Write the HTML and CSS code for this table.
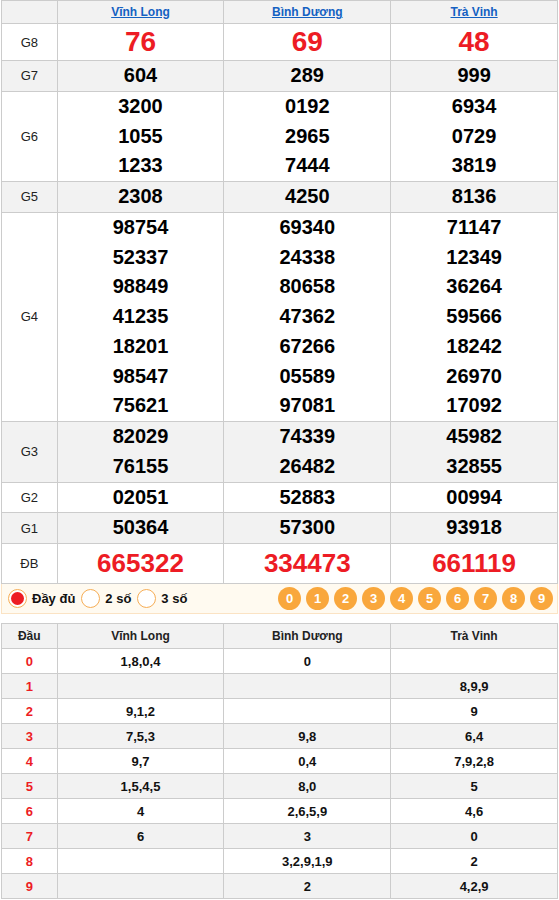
FILE: index.html
```html
<!DOCTYPE html>
<html lang="vi">
<head>
<meta charset="utf-8">
<title>XSMN</title>
<link rel="stylesheet" href="styles.css">
</head>
<body>
<div class="wrap">
<table class="kq">
<colgroup><col class="c1"><col class="c2"><col class="c2"><col class="c2"></colgroup>
<thead>
<tr><th></th><th><a href="#">Vĩnh Long</a></th><th><a href="#">Bình Dương</a></th><th><a href="#">Trà Vinh</a></th></tr>
</thead>
<tbody>
<tr class="g8"><td class="lbl">G8</td><td class="num">76</td><td class="num">69</td><td class="num">48</td></tr>
<tr class="alt"><td class="lbl">G7</td><td class="num">604</td><td class="num">289</td><td class="num">999</td></tr>
<tr><td class="lbl">G6</td>
<td class="num"><div>3200</div><div>1055</div><div>1233</div></td>
<td class="num"><div>0192</div><div>2965</div><div>7444</div></td>
<td class="num"><div>6934</div><div>0729</div><div>3819</div></td></tr>
<tr class="alt"><td class="lbl">G5</td><td class="num">2308</td><td class="num">4250</td><td class="num">8136</td></tr>
<tr><td class="lbl">G4</td>
<td class="num"><div>98754</div><div>52337</div><div>98849</div><div>41235</div><div>18201</div><div>98547</div><div>75621</div></td>
<td class="num"><div>69340</div><div>24338</div><div>80658</div><div>47362</div><div>67266</div><div>05589</div><div>97081</div></td>
<td class="num"><div>71147</div><div>12349</div><div>36264</div><div>59566</div><div>18242</div><div>26970</div><div>17092</div></td></tr>
<tr class="alt"><td class="lbl">G3</td>
<td class="num"><div>82029</div><div>76155</div></td>
<td class="num"><div>74339</div><div>26482</div></td>
<td class="num"><div>45982</div><div>32855</div></td></tr>
<tr><td class="lbl">G2</td><td class="num">02051</td><td class="num">52883</td><td class="num">00994</td></tr>
<tr class="alt"><td class="lbl">G1</td><td class="num">50364</td><td class="num">57300</td><td class="num">93918</td></tr>
<tr class="db"><td class="lbl">ĐB</td><td class="num">665322</td><td class="num">334473</td><td class="num">661119</td></tr>
</tbody>
</table>

<div class="filter">
  <div class="opts">
    <label class="opt"><span class="radio on"></span>Đầy đủ</label>
    <label class="opt"><span class="radio"></span>2 số</label>
    <label class="opt"><span class="radio"></span>3 số</label>
  </div>
  <div class="balls">
    <span class="ball">0</span><span class="ball">1</span><span class="ball">2</span><span class="ball">3</span><span class="ball">4</span><span class="ball">5</span><span class="ball">6</span><span class="ball">7</span><span class="ball">8</span><span class="ball">9</span>
  </div>
</div>

<table class="loto">
<colgroup><col class="c1"><col class="c2"><col class="c2"><col class="c2"></colgroup>
<thead><tr><th>Đầu</th><th>Vĩnh Long</th><th>Bình Dương</th><th>Trà Vinh</th></tr></thead>
<tbody>
<tr><td class="d">0</td><td>1,8,0,4</td><td>0</td><td></td></tr>
<tr class="alt"><td class="d">1</td><td></td><td></td><td>8,9,9</td></tr>
<tr><td class="d">2</td><td>9,1,2</td><td></td><td>9</td></tr>
<tr class="alt"><td class="d">3</td><td>7,5,3</td><td>9,8</td><td>6,4</td></tr>
<tr><td class="d">4</td><td>9,7</td><td>0,4</td><td>7,9,2,8</td></tr>
<tr class="alt"><td class="d">5</td><td>1,5,4,5</td><td>8,0</td><td>5</td></tr>
<tr><td class="d">6</td><td>4</td><td>2,6,5,9</td><td>4,6</td></tr>
<tr class="alt"><td class="d">7</td><td>6</td><td>3</td><td>0</td></tr>
<tr><td class="d">8</td><td></td><td>3,2,9,1,9</td><td>2</td></tr>
<tr class="alt"><td class="d">9</td><td></td><td>2</td><td>4,2,9</td></tr>
</tbody>
</table>
</div>
</body>
</html>
```

FILE: styles.css
```css
* { box-sizing: border-box; }
body {
  margin: 0;
  font-family: "Liberation Sans", Arial, sans-serif;
  color: #000;
  background: #fff;
}
.wrap { margin: 0 1px; }

table {
  width: 100%;
  border-collapse: collapse;
  table-layout: fixed;
}
col.c1 { width: 10%; }
col.c2 { width: 30%; }
th, td {
  border: 1px solid #cccccc;
  padding: 0;
  text-align: center;
  vertical-align: middle;
}

.kq thead th {
  background: #f2f2f2;
  height: 23px;
  font-size: 12px;
  font-weight: bold;
}
.kq thead a { color: #1461c2; text-decoration: underline; }
.kq tr.alt td { background: #f2f2f2; }
.kq td.lbl { font-size: 13px; color: #222; }
.kq td.num {
  font-size: 20px;
  font-weight: bold;
  line-height: 29.75px;
  color: #000;
}
.kq tr.g8 td.num {
  font-size: 28px;
  line-height: 36px;
  color: #ed1c24;
}
.kq tr.db td.num {
  font-size: 26px;
  line-height: 39px;
  color: #ed1c24;
}

.filter {
  display: flex;
  justify-content: space-between;
  align-items: center;
  height: 30px;
  background: #fffaf0;
  border: 1px solid #fbe3c4;
  border-top: none;
  padding: 0 4px 0 6px;
  margin-bottom: 9px;
}
.opts { display: flex; align-items: center; gap: 6px; }
.opt {
  display: flex;
  align-items: center;
  gap: 5px;
  font-size: 13px;
  font-weight: bold;
  color: #111;
}
.radio {
  width: 19px;
  height: 19px;
  border: 1px solid #f6ad55;
  border-radius: 50%;
  background: #fff;
  display: flex;
  align-items: center;
  justify-content: center;
}
.radio.on::after {
  content: "";
  width: 13px;
  height: 13px;
  border-radius: 50%;
  background: #ed1c24;
}
.balls { display: flex; gap: 5px; }
.ball {
  width: 23px;
  height: 23px;
  border-radius: 50%;
  background: #f9a73c;
  color: #fff;
  font-size: 13px;
  font-weight: bold;
  display: flex;
  align-items: center;
  justify-content: center;
}

.loto th {
  background: #f2f2f2;
  height: 25px;
  font-size: 12px;
  font-weight: bold;
  color: #222;
}
.loto td {
  height: 25px;
  font-size: 13px;
  font-weight: bold;
  color: #111;
}
.loto tr.alt td { background: #f2f2f2; }
.loto td.d { color: #ed1c24; }
```
